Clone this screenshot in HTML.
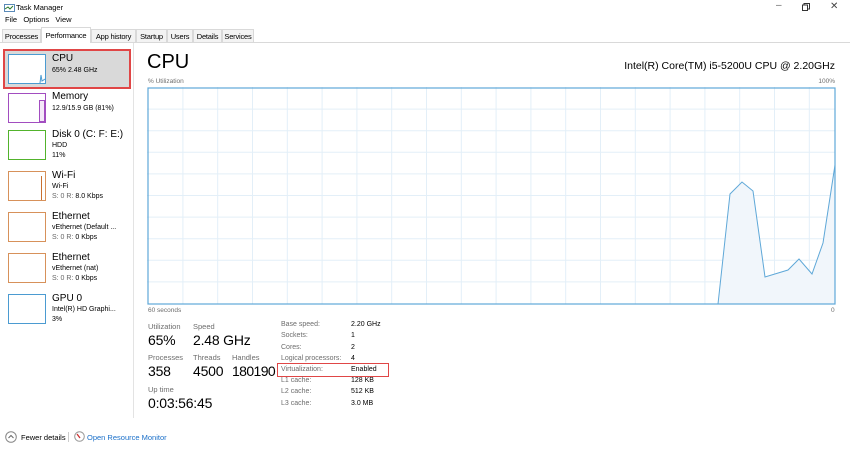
<!DOCTYPE html>
<html><head><style>
*{margin:0;padding:0;box-sizing:border-box}
body{width:850px;height:453px;background:#fff;font-family:"Liberation Sans",sans-serif;position:relative;overflow:hidden;color:#000}
.a{position:absolute;white-space:nowrap}
.g{color:#666}
.tab{position:absolute;top:29px;height:13px;font-size:7.5px;padding-top:2px;text-align:center;border:1px solid #d9d9d9;border-bottom:none;background:#f3f3f3;color:#000;overflow:hidden;white-space:nowrap;letter-spacing:-0.2px}
.thumb{position:absolute;left:8px;width:38px;height:30px;border:1px solid}
.nm{position:absolute;left:52px;font-size:10px}
.sub{position:absolute;left:52px;font-size:7px;line-height:9.5px}
.lbl{font-size:7.5px;color:#6d6d6d;position:absolute}
.val{font-size:14px;position:absolute;letter-spacing:-0.2px}
.kl{position:absolute;left:281px;font-size:7px;color:#6d6d6d}
.kv{position:absolute;left:351px;font-size:7px}
</style></head><body>
<svg class="a" style="left:4px;top:3px" width="11" height="10"><rect x="0.5" y="1.5" width="10" height="7" fill="#fff" stroke="#5a8ab8"/><polyline points="1,6 4,4 6,6 9,3" fill="none" stroke="#2a7a2a"/></svg>
<div class="a" style="left:16px;top:3px;font-size:7.5px">Task Manager</div>
<div class="a" style="left:776px;top:0;font-size:10px;color:#666">&#8211;</div>
<svg class="a" style="left:802px;top:3px" width="8" height="8"><rect x="0.5" y="2" width="5" height="5.5" fill="none" stroke="#333"/><path d="M2 2V0.5H7.5V6H5.5" fill="none" stroke="#333"/></svg>
<div class="a" style="left:830px;top:1px;font-size:10px;color:#444">&#10005;</div>
<div class="a" style="left:5px;top:15px;font-size:7.5px">File &nbsp;&nbsp;Options &nbsp;&nbsp;View</div>
<div class="a" style="left:0;top:42px;width:850px;height:1px;background:#d9d9d9"></div>
<div class="tab" style="left:2px;width:39px">Processes</div>
<div class="tab" style="left:41px;width:50px;top:27px;height:16px;background:#fff;padding-top:3px">Performance</div>
<div class="tab" style="left:91px;width:45px">App history</div>
<div class="tab" style="left:136px;width:31px">Startup</div>
<div class="tab" style="left:167px;width:26px">Users</div>
<div class="tab" style="left:193px;width:29px">Details</div>
<div class="tab" style="left:222px;width:32px">Services</div>
<div class="a" style="left:133px;top:43px;width:1px;height:375px;background:#e3e3e3"></div>

<div class="a" style="left:3px;top:49px;width:128px;height:40px;background:#d9d9d9;border:2px solid #e04646"></div>
<div class="thumb" style="top:54px;border-color:#4b9bd1;background:#fff"><svg width="36" height="28" style="position:absolute;left:0;top:0"><polyline points="31,28 32,20 33,26 36,24" fill="none" stroke="#4b9bd1"/></svg></div>
<div class="nm" style="top:53px">CPU</div><div class="sub" style="top:66px">65% 2.48 GHz</div>

<div class="thumb" style="top:93px;border-color:#a24dc0"><div style="position:absolute;right:0;bottom:0;width:6px;height:22px;border:1px solid #a24dc0;background:#f4e8f8"></div></div>
<div class="nm" style="top:91px">Memory</div><div class="sub" style="top:104px">12.9/15.9 GB (81%)</div>

<div class="thumb" style="top:130px;border-color:#52b32c"></div>
<div class="nm" style="top:129px">Disk 0 (C: F: E:)</div><div class="sub" style="top:141px">HDD<br>11%</div>

<div class="thumb" style="top:171px;border-color:#d7915a"><div style="position:absolute;left:32px;top:4px;width:1px;height:24px;background:#c87030"></div></div>
<div class="nm" style="top:170px">Wi-Fi</div><div class="sub" style="top:182px">Wi-Fi<br><span class="g">S: 0 R:</span> 8.0 Kbps</div>

<div class="thumb" style="top:212px;border-color:#d7915a"></div>
<div class="nm" style="top:211px">Ethernet</div><div class="sub" style="top:223px">vEthernet (Default ...<br><span class="g">S: 0 R:</span> 0 Kbps</div>

<div class="thumb" style="top:253px;border-color:#d7915a"></div>
<div class="nm" style="top:252px">Ethernet</div><div class="sub" style="top:264px">vEthernet (nat)<br><span class="g">S: 0 R:</span> 0 Kbps</div>

<div class="thumb" style="top:294px;border-color:#4b9bd1"></div>
<div class="nm" style="top:293px">GPU 0</div><div class="sub" style="top:305px">Intel(R) HD Graphi...<br>3%</div>

<div class="a" style="left:147px;top:51px;font-size:20px">CPU</div>
<div class="a" style="right:15px;top:60px;font-size:10.5px">Intel(R) Core(TM) i5-5200U CPU @ 2.20GHz</div>
<div class="a" style="left:148px;top:78px;font-size:6.5px;color:#6d6d6d">% Utilization</div>
<div class="a" style="right:15px;top:78px;font-size:6.5px;color:#6d6d6d">100%</div>
<svg class="a" style="left:147px;top:87px" width="690" height="219">
<g stroke="#e3eff8" stroke-width="1">
<line x1="0" y1="22.1" x2="688" y2="22.1"/><line x1="0" y1="43.7" x2="688" y2="43.7"/><line x1="0" y1="65.3" x2="688" y2="65.3"/><line x1="0" y1="86.9" x2="688" y2="86.9"/><line x1="0" y1="108.5" x2="688" y2="108.5"/><line x1="0" y1="130.1" x2="688" y2="130.1"/><line x1="0" y1="151.7" x2="688" y2="151.7"/><line x1="0" y1="173.3" x2="688" y2="173.3"/><line x1="0" y1="194.9" x2="688" y2="194.9"/>
<line x1="35.9" y1="0" x2="35.9" y2="217"/><line x1="70.7" y1="0" x2="70.7" y2="217"/><line x1="105.5" y1="0" x2="105.5" y2="217"/><line x1="140.3" y1="0" x2="140.3" y2="217"/><line x1="175.1" y1="0" x2="175.1" y2="217"/><line x1="209.9" y1="0" x2="209.9" y2="217"/><line x1="244.7" y1="0" x2="244.7" y2="217"/><line x1="279.5" y1="0" x2="279.5" y2="217"/><line x1="314.3" y1="0" x2="314.3" y2="217"/><line x1="349.1" y1="0" x2="349.1" y2="217"/><line x1="383.9" y1="0" x2="383.9" y2="217"/><line x1="418.7" y1="0" x2="418.7" y2="217"/><line x1="453.5" y1="0" x2="453.5" y2="217"/><line x1="488.3" y1="0" x2="488.3" y2="217"/><line x1="523.1" y1="0" x2="523.1" y2="217"/><line x1="557.9" y1="0" x2="557.9" y2="217"/><line x1="592.7" y1="0" x2="592.7" y2="217"/><line x1="627.5" y1="0" x2="627.5" y2="217"/><line x1="662.3" y1="0" x2="662.3" y2="217"/>
</g>
<polygon points="571,217 583,107 595,95 606,104 618,190 641,183 652,172 665,187 676,156 688,78 688,217" fill="#f1f6fb" stroke="#5fa8d8" stroke-width="1"/>
<rect x="1" y="1" width="687" height="216" fill="none" stroke="#5fa8d8" stroke-width="1.2"/>
</svg>
<div class="a" style="left:148px;top:307px;font-size:6.5px;color:#6d6d6d">60 seconds</div>
<div class="a" style="left:831px;top:307px;font-size:6.5px;color:#6d6d6d">0</div>

<div class="lbl" style="left:148px;top:322px">Utilization</div><div class="lbl" style="left:193px;top:322px">Speed</div>
<div class="val" style="left:148px;top:332px">65%</div><div class="val" style="left:193px;top:332px">2.48 GHz</div>
<div class="lbl" style="left:148px;top:353px">Processes</div><div class="lbl" style="left:193px;top:353px">Threads</div><div class="lbl" style="left:232px;top:353px">Handles</div>
<div class="val" style="left:148px;top:363px">358</div><div class="val" style="left:193px;top:363px">4500</div><div class="val" style="left:232px;top:363px;letter-spacing:-0.6px">180190</div>
<div class="lbl" style="left:148px;top:385px">Up time</div>
<div class="val" style="left:148px;top:395px">0:03:56:45</div>

<div class="kl" style="top:321px">Base speed:</div><div class="kv" style="top:321px">2.20 GHz</div>
<div class="kl" style="top:332px">Sockets:</div><div class="kv" style="top:332px">1</div>
<div class="kl" style="top:344px">Cores:</div><div class="kv" style="top:344px">2</div>
<div class="kl" style="top:355px">Logical processors:</div><div class="kv" style="top:355px">4</div>
<div class="a" style="left:277px;top:363px;width:112px;height:14px;border:1.5px solid #e04646"></div>
<div class="kl" style="top:366px">Virtualization:</div><div class="kv" style="top:366px">Enabled</div>
<div class="kl" style="top:377px">L1 cache:</div><div class="kv" style="top:377px">128 KB</div>
<div class="kl" style="top:388px">L2 cache:</div><div class="kv" style="top:388px">512 KB</div>
<div class="kl" style="top:400px">L3 cache:</div><div class="kv" style="top:400px">3.0 MB</div>

<svg class="a" style="left:5px;top:431px" width="12" height="12"><circle cx="6" cy="6" r="5.3" fill="none" stroke="#888"/><polyline points="3.5,7 6,4.5 8.5,7" fill="none" stroke="#666"/></svg>
<div class="a" style="left:21px;top:433px;font-size:7.5px">Fewer details</div>
<div class="a" style="left:68px;top:432px;width:1px;height:10px;background:#ccc"></div>
<svg class="a" style="left:74px;top:431px" width="11" height="11"><circle cx="5.5" cy="5.5" r="4.8" fill="#fff" stroke="#999"/><line x1="3" y1="3" x2="6" y2="7" stroke="#c33" stroke-width="1.3"/></svg>
<div class="a" style="left:87px;top:433px;font-size:7.5px;color:#1a6fc9">Open Resource Monitor</div>
</body></html>
